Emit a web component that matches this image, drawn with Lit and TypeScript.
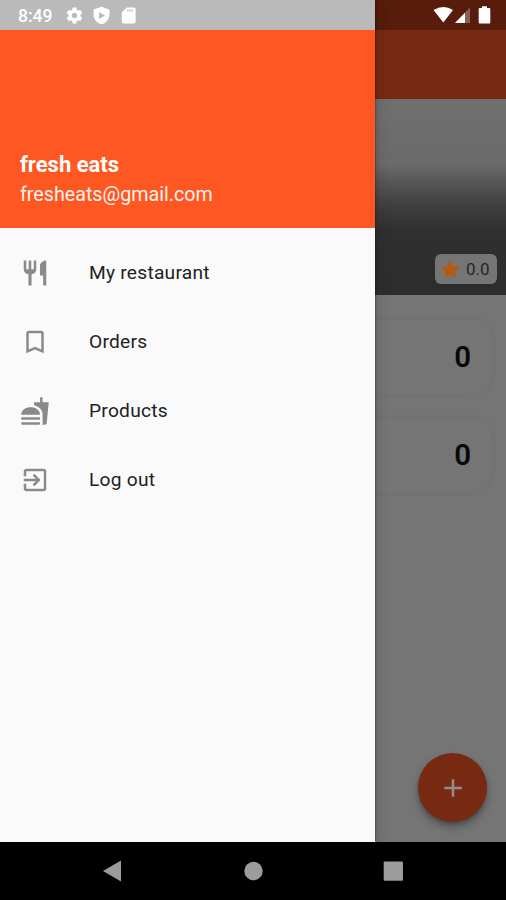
import { LitElement, html, css, svg } from "lit";
import { customElement } from "lit/decorators.js";

const icons: Record<string, string> = {
  restaurant:
    "M11 9H9V2H7v7H5V2H3v7c0 2.12 1.66 3.84 3.75 3.97V22h2.5v-9.03C11.34 12.84 13 11.12 13 9V2h-2v7zm5-3v8h2.5v8H21V2c-2.76 0-5 2.24-5 4z",
  bookmark:
    "M17 3H7c-1.1 0-1.99.9-1.99 2L5 21l7-3 7 3V5c0-1.1-.9-2-2-2zm0 15l-5-2.18L7 18V5h10v13z",
  fastfood:
    "M18.06 22.99h1.66c.84 0 1.53-.64 1.63-1.46L23 5.05h-5V1h-1.97v4.05h-4.97l.3 2.34c1.71.47 3.31 1.32 4.27 2.26 1.44 1.42 2.43 2.89 2.43 5.29v8.05zM1 21.99V21h15.03v.99c0 .55-.45 1-1.01 1H2.01c-.56 0-1.01-.45-1.01-1zm15.03-7c0-8-15.03-8-15.03 0h15.03zM1.02 17h15v2h-15z",
  exit: "M10.09 15.59L11.5 17l5-5-5-5-1.41 1.41L12.67 11H3v2h9.67l-2.58 2.59zM19 3H5c-1.11 0-2 .9-2 2v4h2V5h14v14H5v-4H3v4c0 1.1.89 2 2 2h14c1.1 0 2-.9 2-2V5c0-1.1-.9-2-2-2z",
  gear: "M19.43 12.98c.04-.32.07-.64.07-.98s-.03-.66-.07-.98l2.11-1.65c.19-.15.24-.42.12-.64l-2-3.46c-.12-.22-.39-.3-.61-.22l-2.49 1c-.52-.4-1.08-.73-1.69-.98l-.38-2.65C14.46 2.18 14.25 2 14 2h-4c-.25 0-.46.18-.49.42l-.38 2.65c-.61.25-1.17.59-1.69.98l-2.49-1c-.23-.09-.49 0-.61.22l-2 3.46c-.13.22-.07.49.12.64l2.11 1.65c-.04.32-.07.65-.07.98s.03.66.07.98l-2.11 1.65c-.19.15-.24.42-.12.64l2 3.46c.12.22.39.3.61.22l2.49-1c.52.4 1.08.73 1.69.98l.38 2.65c.03.24.24.42.49.42h4c.25 0 .46-.18.49-.42l.38-2.65c.61-.25 1.17-.59 1.69-.98l2.49 1c.23.09.49 0 .61-.22l2-3.46c.12-.22.07-.49-.12-.64l-2.11-1.65zM12 15.5c-1.93 0-3.5-1.57-3.5-3.5s1.57-3.5 3.5-3.5 3.5 1.57 3.5 3.5-1.57 3.5-3.5 3.5z",
  shield: "M12 1L2 4.500V11c0 5.600 4.200 10.600 10 12 5.800-1.400 10-6.400 10-12V4.500L12 1zM9 7.500l7.500 4.500L9 16.500z",
  sdcard:
    "M19 2h-9L3.500 8v12c0 1.100.9 2 2 2H19c1.100 0 2-.9 2-2V4c0-1.100-.9-2-2-2zm-7 5h-1.600V4.500H12V7zm2.700 0h-1.600V4.500h1.600V7zm2.700 0h-1.600V4.500h1.600V7z",
  star: "M12 17.27L18.18 21l-1.64-7.03L22 9.240l-7.190-.61L12 2 9.190 8.630 2 9.240l5.460 4.730L5.820 21z",
  plus: "M19 13h-6v6h-2v-6H5v-2h6V5h2v6h6v2z",
};

const icon = (name: string, cls = "") => html`<svg class="icon ${cls}" viewBox="0 0 24 24">
  ${svg`<path fill-rule="evenodd" d=${icons[name]}></path>`}
</svg>`;

@customElement("app-drawer")
export class AppDrawer extends LitElement {
  static styles = css`
    :host {
      display: flex;
      flex-direction: column;
      background: #fafafa;
    }
    .status {
      height: 30px;
      box-sizing: border-box;
      display: flex;
      align-items: center;
      padding: 1px 0 0 18px;
      background: #bababa;
      color: #fff;
      font-size: 17.500px;
      font-weight: 500;
    }
    .time {
      width: 46.500px;
    }
    .status .icon {
      width: 19px;
      height: 19px;
      fill: #fff;
      margin-right: 8px;
    }
    .header {
      height: 198px;
      box-sizing: border-box;
      display: flex;
      flex-direction: column;
      justify-content: flex-end;
      padding: 0 20px 18px;
      background: #ff5722;
      color: #fff;
      font-size: 19.700px;
      line-height: 30px;
      white-space: nowrap;
    }
    .name {
      font-size: 22px;
      font-weight: 700;
    }
    .email {
      color: #fff3ef;
    }
    .menu {
      padding-top: 10px;
    }
    .item {
      height: 69px;
      display: flex;
      align-items: center;
      padding-left: 20px;
      gap: 39px;
      color: #212121;
      font-size: 19.200px;
      letter-spacing: 0.240px;
    }
    .item .icon {
      width: 30px;
      height: 30px;
      fill: #8a8a8a;
    }
  `;

  private items = [
    ["restaurant", "My restaurant"],
    ["bookmark", "Orders"],
    ["fastfood", "Products"],
    ["exit", "Log out"],
  ];

  render() {
    return html`
      <div class="status"><span class="time">8:49</span>${icon("gear")}${icon("shield")}${icon("sdcard")}</div>
      <div class="header">
        <div class="name">fresh eats</div>
        <div class="email">fresheats@gmail.com</div>
      </div>
      <div class="menu">
        ${this.items.map(([i, label]) => html`<div class="item">${icon(i)}<span>${label}</span></div>`)}
      </div>
    `;
  }
}

@customElement("app-root")
export class AppRoot extends LitElement {
  static styles = css`
    :host {
      display: flex;
      flex-direction: column;
      width: 506px;
      height: 900px;
      overflow: hidden;
      background: #000;
      font-family: Roboto, sans-serif;
    }
    .screen {
      position: relative;
      height: 842px;
      background: #757575;
      overflow: hidden;
    }
    .status {
      height: 30px;
      box-sizing: border-box;
      padding: 5px 15px 0 0;
      display: flex;
      justify-content: flex-end;
      background: #571c0b;
    }
    .signals {
      width: 60px;
      height: 20px;
    }
    .bar {
      height: 69px;
      background: #782912;
    }
    .cover {
      height: 196px;
      box-sizing: border-box;
      display: flex;
      justify-content: flex-end;
      align-items: flex-end;
      padding: 0 9px 11px;
      background: linear-gradient(#6f6f6f 0, #6a6a6a 34%, #5b5b5b 40%, #404040 54%, #2f2f2f 67%, #2d2d2d 100%);
    }
    .rating {
      width: 62px;
      height: 30px;
      box-sizing: border-box;
      padding-left: 4px;
      display: flex;
      align-items: center;
      gap: 4px;
      border-radius: 6px;
      background: #757575;
      color: #262626;
      font-size: 17px;
    }
    .rating .icon {
      width: 23px;
      height: 23px;
      fill: #b65a0b;
    }
    .cards {
      display: flex;
      flex-direction: column;
      gap: 24px;
      padding: 25px 14px 0;
    }
    .card {
      height: 74px;
      box-sizing: border-box;
      padding-right: 21px;
      display: flex;
      justify-content: flex-end;
      align-items: center;
      border-radius: 20px;
      background: #757575;
      box-shadow: 0 0 4px 1px #707070;
      color: #080808;
      font-size: 29.500px;
      font-weight: 600;
    }
    .fab {
      position: absolute;
      right: 19px;
      bottom: 20px;
      width: 69px;
      height: 69px;
      display: grid;
      place-items: center;
      border-radius: 50%;
      background: #782912;
      box-shadow: 0 5px 9px rgba(0, 0, 0, 0.300), 0 2px 3px rgba(0, 0, 0, 0.150);
    }
    .fab .icon {
      width: 30px;
      height: 30px;
      fill: #8f8f8f;
    }
    .drawer {
      position: absolute;
      left: 0;
      top: 0;
      width: 375px;
      height: 842px;
      box-shadow: 0 0 2px rgba(0, 0, 0, 0.600), 0 0 14px rgba(0, 0, 0, 0.200);
    }
    .nav {
      height: 58px;
    }
    .nav svg {
      display: block;
      width: 506px;
      height: 58px;
    }
  `;

  render() {
    return html`
      <div class="screen">
        <div class="status">
          <svg class="signals" viewBox="0 0 60 20">
            <path fill="#fff" d="M2.500 5Q12.500-1 22 5L12.300 17.500z" />
            <path fill="#886257" d="M39 2.500V18H24z" />
            <path fill="#fff" d="M34 7.700V18H24z" />
            <path fill="#fff" d="M48.700 3h2.300V1.200h5V3h2.300a1 1 0 0 1 1 1v13.500a1 1 0 0 1-1 1h-9.600a1 1 0 0 1-1-1V4a1 1 0 0 1 1-1z" />
          </svg>
        </div>
        <div class="bar"></div>
        <div class="cover">
          <div class="rating">${icon("star")}<span>0.0</span></div>
        </div>
        <div class="cards">
          <div class="card">0</div>
          <div class="card">0</div>
        </div>
        <div class="fab">${icon("plus")}</div>
        <app-drawer class="drawer"></app-drawer>
      </div>
      <div class="nav">
        <svg viewBox="0 0 506 58" fill="#9c9c9c">
          <path d="M103 29l18-10.500v21z" />
          <circle cx="253.500" cy="29" r="9.200" />
          <rect x="383.700" y="19.500" width="19.300" height="19.300" rx="1" />
        </svg>
      </div>
    `;
  }
}
